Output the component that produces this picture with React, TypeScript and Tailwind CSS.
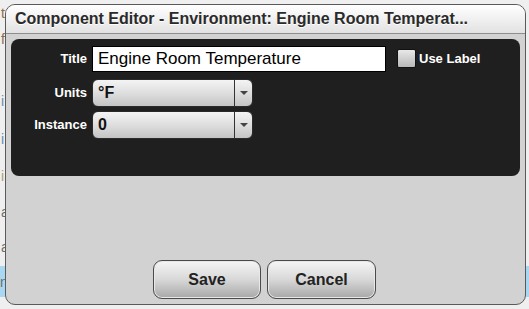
import { useState } from 'react';

const bgRows = [
  { ch: 't', h: 'h-[26px]', color: 'text-[#8a6a4a]' },
  { ch: 'f', h: 'h-[62px]', color: 'text-[#8a6a4a]' },
  { ch: 'i', h: 'h-[38px]', color: 'text-[#6a8ab0]' },
  { ch: 'i', h: 'h-[37px]', color: 'text-[#6a8ab0]' },
  { ch: 'i', h: 'h-[36px]', color: 'text-[#b0a070]' },
  { ch: 'a', h: 'h-[35px]', color: 'text-[#707070]' },
  { ch: 'a', h: 'h-[26px]', color: 'text-[#707070]' },
];

function SelectBox({ value }: { value: string }) {
  return (
    <div className="flex h-[28px] w-[161px] items-stretch rounded-[6px] border border-[#2a2a2a] bg-gradient-to-b from-[#f4f4f4] via-[#dedede] to-[#c4c4c4]">
      <div className="flex flex-1 items-center pl-[5px] text-[16px] font-bold text-[#111]">
        {value}
      </div>
      <div className="w-px bg-[#333]" />
      <div className="flex w-[17px] items-center justify-center">
        <div className="h-0 w-0 border-x-[4px] border-t-[4px] border-x-transparent border-t-[#444]" />
      </div>
    </div>
  );
}

export default function App() {
  const [title, setTitle] = useState('Engine Room Temperature');
  const [useLabel, setUseLabel] = useState(false);

  return (
    <div
      className="relative h-[309px] w-[529px] overflow-hidden bg-[#efefef]"
      style={{ fontFamily: '"Liberation Sans", Arial, sans-serif' }}
    >
      {/* page behind the dialog */}
      <div className="flex flex-col pt-[6px] text-[14px] leading-none">
        {bgRows.map((r, i) => (
          <div key={i} className={`${r.h} flex items-start pl-[1px] ${r.color}`}>
            {r.ch}
          </div>
        ))}
        <div className="flex h-[31px] items-center bg-[#a9d6f0] text-[#707070]">n</div>
      </div>

      {/* dialog */}
      <div className="absolute left-[5px] top-[4px] flex h-[301px] w-[521px] flex-col overflow-hidden rounded-[10px] border border-[#5a5a5a] bg-[#d2d2d2]">
        <div className="flex h-[29px] items-center border-b border-[#8e8e8e] bg-gradient-to-b from-[#ffffff] to-[#e2e2e2] pl-[9px] text-[16px] font-bold text-[#2a2a2a] [text-shadow:0_1px_0_#ffffff]">
          Component Editor - Environment: Engine Room Temperat...
        </div>

        <div className="mx-[5px] mt-[5px] h-[137px] rounded-[8px] bg-[#1f1f1f] pt-[6px]">
          <div className="flex h-[27px] items-center">
            <div className="w-[81px] pr-[5px] text-right text-[13px] font-bold text-white">Title</div>
            <input
              value={title}
              onChange={(e) => setTitle(e.target.value)}
              className="h-[26px] w-[294px] border border-black bg-white pl-[5px] text-[17px] text-black outline-none"
            />
            <button
              onClick={() => setUseLabel(!useLabel)}
              className="ml-[11px] h-[19px] w-[19px] rounded-[2px] border border-[#111] bg-gradient-to-b from-[#e8e8e8] to-[#b8b8b8]"
            />
            <span className="ml-[3px] text-[13px] font-bold text-white">Use Label</span>
          </div>
          <div className="mt-[7px] flex items-center">
            <div className="w-[81px] pr-[5px] text-right text-[13px] font-bold text-white">Units</div>
            <SelectBox value="°F" />
          </div>
          <div className="mt-[4px] flex items-center">
            <div className="w-[81px] pr-[5px] text-right text-[13px] font-bold text-white">Instance</div>
            <SelectBox value="0" />
          </div>
        </div>

        <div className="flex flex-1 items-end justify-center gap-[6px] pb-[5px] pr-[2px]">
          <button className="h-[39px] w-[108px] rounded-[9px] border border-[#4a4a4a] bg-gradient-to-b from-[#f6f6f6] via-[#d8d8d8] to-[#a8a8a8] text-[16px] font-bold text-[#222] shadow-[inset_0_0_0_1px_#e8e8e8]">
            Save
          </button>
          <button className="h-[39px] w-[109px] rounded-[9px] border border-[#4a4a4a] bg-gradient-to-b from-[#f6f6f6] via-[#d8d8d8] to-[#a8a8a8] text-[16px] font-bold text-[#222] shadow-[inset_0_0_0_1px_#e8e8e8]">
            Cancel
          </button>
        </div>
      </div>
    </div>
  );
}
